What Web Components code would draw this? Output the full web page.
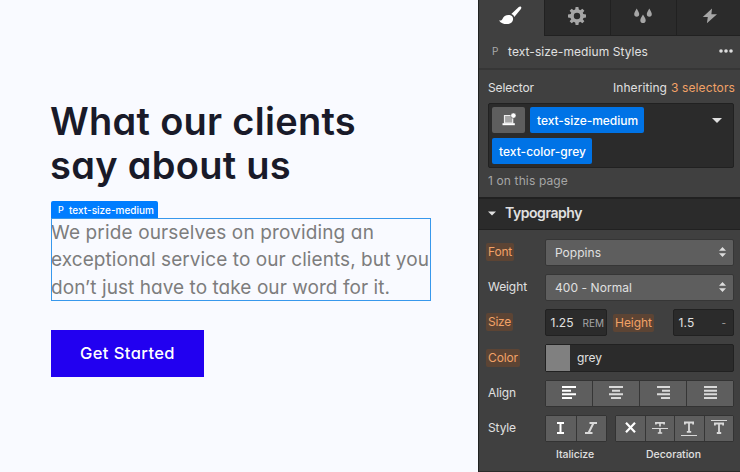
<!DOCTYPE html>
<html lang="en">
<head>
<meta charset="utf-8">
<title>Designer</title>
<style>
  body{
    margin: 0;
    width: 740px;
    height: 472px;
    overflow: hidden;
    font-family: Inter, sans-serif;
    font-size: 12px;
  }
</style>
</head>
<body>
<designer-app>
  <page-canvas slot="canvas"></page-canvas>
  <style-panel slot="panel"></style-panel>
</designer-app>

<script>
const icons = {
  brush: `<svg width="24" height="20" viewBox="0 0 24 20"><path fill="#fff" d="M22.9.8c.7.6.5 1.400 0 2.100l-6.600 8.100c-.5-1.400-1.600-2.400-3-2.900L20.800 1c.6-.5 1.500-.7 2.100-.2zM11.600 9.100c2.200.3 3.500 1.900 3.500 3.900-.1 3.400-3 5.100-6.600 5.100-3 0-5.600-.9-7.500-3.600 1.500.3 3-.1 3.600-1.800.8-2.500 3.700-4 7-3.600z"/></svg>`,
  gear: `<svg width="20" height="20" viewBox="-10 -10 20 20" fill="#a6a6a6"><path fill-rule="evenodd" d="M0-6.700A6.700 6.700 0 1 1 0 6.700 6.700 6.700 0 1 1 0-6.700zM0-3.200A3.200 3.200 0 1 0 0 3.200 3.200 3.200 0 1 0 0-3.200z"/><path d="M-1.900-6-1.400-9h2.800l.5 3zM-1.900 6-1.400 9h2.800l.5-3zM-6-1.900-9-1.400v2.800l3 .5zM6-1.900 9-1.400v2.800l-3 .5z"/><path transform="rotate(45)" d="M-1.900-6-1.400-9h2.800l.5 3zM-1.900 6-1.400 9h2.800l.5-3zM-6-1.900-9-1.400v2.800l3 .5zM6-1.900 9-1.400v2.800l-3 .5z"/></svg>`,
  drops: `<svg width="20" height="16" viewBox="0 0 20 16" fill="#a6a6a6"><path d="M3.700.5c1.400 2.500 2.500 4 2.500 5.600a2.500 2.600 0 0 1-5 0C1.200 4.500 2.300 3 3.700.5zM16.300.5c1.400 2.500 2.500 4 2.500 5.600a2.500 2.600 0 0 1-5 0c0-1.600 1.100-3.100 2.500-5.600zM10 6.500c1.500 2.600 2.700 4.100 2.700 5.800a2.700 2.800 0 0 1-5.400 0c0-1.700 1.200-3.200 2.700-5.800z"/></svg>`,
  bolt: `<svg width="16" height="16" viewBox="0 0 16 16"><path fill="#a6a6a6" d="M10 .5.8 9.100h5L4.900 15.300 15 6.300H9.400z"/></svg>`,
  dots: `<svg width="14" height="4" viewBox="0 0 14 4" fill="#ddd"><circle cx="2" cy="2" r="1.800"/><circle cx="7" cy="2" r="1.800"/><circle cx="12" cy="2" r="1.800"/></svg>`,
  state: `<svg width="14" height="14" viewBox="0 0 14 14"><path d="M2.500 10V2.500h8.200V10z" fill="#a5a5a5" stroke="#eee" stroke-width="1.200"/><path d="M.5 10.200h12.300v2H.5z" fill="#fff"/><circle cx="11.400" cy="2.600" r="2.700" fill="#fff" stroke="#5e5e5e" stroke-width=".7"/></svg>`,
  caret: `<svg width="10" height="5" viewBox="0 0 10 5"><path fill="#e0e0e0" d="M0 0h10L5 5z"/></svg>`,
  sort: `<svg width="7" height="10" viewBox="0 0 7 10"><path fill="#ddd" d="M3.500 0 7 3.800H0zM3.500 10 7 6.200H0z"/></svg>`,
  left: `<svg width="14" height="13" viewBox="0 0 14 13"><path stroke="#fff" stroke-width="2" d="M0 1h14M0 4.700h9M0 8.300h14M0 12h10"/></svg>`,
  center: `<svg width="14" height="13" viewBox="0 0 14 13"><path stroke="#d9d9d9" stroke-width="2" d="M0 1h14M3 4.700h8M0 8.300h14M2 12h10"/></svg>`,
  right: `<svg width="14" height="13" viewBox="0 0 14 13"><path stroke="#d9d9d9" stroke-width="2" d="M1 1h13M6 4.700h8M1 8.300h13M5 12h9"/></svg>`,
  justify: `<svg width="14" height="13" viewBox="0 0 14 13"><path stroke="#d9d9d9" stroke-width="2" d="M1 1h13M1 4.700h13M1 8.300h13M1 12h13"/></svg>`,
  roman: `<svg width="9" height="12" viewBox="0 0 9 12"><path fill="none" stroke="#fff" stroke-width="2" d="M1 1h7M1 11h7M4.500 1v10"/></svg>`,
  italic: `<svg width="12" height="12" viewBox="0 0 12 12"><path fill="none" stroke="#d9d9d9" stroke-width="2" d="M4.500 1H12M0 11h7.500M8.500 1l-5 10"/></svg>`,
  none: `<svg width="11" height="11" viewBox="0 0 11 11"><path stroke="#fff" stroke-width="2.200" d="M1 .8l9 9.400M10 .8l-9 9.400"/></svg>`,
  strike: `<svg width="16" height="16" viewBox="0 0 16 16"><path fill="none" stroke="#d9d9d9" stroke-width="1.700" d="M3.900 4.500V2.800h8.200v1.700M8 2.800v3.700M8 8.500v4.500M5.800 13h4.400"/><path stroke="#d9d9d9" d="M0 8.500h16"/></svg>`,
  under: `<svg width="16" height="16" viewBox="0 0 16 16"><path fill="none" stroke="#d9d9d9" stroke-width="1.800" d="M3.900 4.500v-2h8.200v2M8 2.500v9M5.800 11.800h4.400"/><path stroke="#d9d9d9" d="M0 15.500h16"/></svg>`,
  over: `<svg width="16" height="16" viewBox="0 0 16 16"><path fill="none" stroke="#d9d9d9" stroke-width="1.800" d="M3.900 5.500v-2h8.200v2M8 3.500v9M5.800 13h4.400"/><path stroke="#d9d9d9" d="M0 .5h16"/></svg>`
};

class BaseElement extends HTMLElement{
  constructor(){
    super();
    this.attachShadow({mode:'open'});
    this.shadowRoot.innerHTML = this.render();
  }
}

class DesignerApp extends BaseElement{
  render(){
    return `
      <style>
        :host{ display: grid; grid-template-columns: 478px 262px; height: 472px; }
      </style>
      <slot name="canvas"></slot>
      <slot name="panel"></slot>
    `;
  }
}

class PageCanvas extends BaseElement{
  render(){
    return `
      <style>
        :host{ display: block; box-sizing: border-box; padding: 99px 47px 0 50px; background: #f9faff; }
        h2{ margin: 0; font-size: 38px; line-height: 44px; font-weight: 600; color: #191a29; }
        h2, p, button{ font-feature-settings: "cv11"; }
        .tag{
          display: flex; align-items: center; box-sizing: border-box;
          width: 107px; height: 17px; margin: 14px 0 0 1px; padding-left: 7px; gap: 6px;
          background: #007dff; color: #fff; font-size: 10px; font-weight: 500;
          border-radius: 2px 2px 0 0;
        }
        .tag span{ font-size: 9px; width: 5px; }
        p{
          box-sizing: border-box; margin: 0 0 0 1px; height: 83px; padding-top: .5px;
          font-size: 19px; line-height: 27.5px; color: #7d7d7d;
          outline: 1px solid #3898ec; outline-offset: -1px;
        }
        button{
          display: block; width: 153px; height: 47px; margin: 29px 0 0 1px; padding: 0 0 2px 29px;
          border: 0; background: #2200f0; color: #fff; text-align: left;
          font-family: inherit; font-size: 16.5px; font-weight: 500;
        }
      </style>
      <h2><fit-text width="306">What our clients</fit-text><fit-text width="241">say about us</fit-text></h2>
      <div class="tag"><span>P</span><fit-text width="85">text-size-medium</fit-text></div>
      <p>
        <fit-text width="323">We pride ourselves on providing an</fit-text>
        <fit-text width="378">exceptional service to our clients, but you</fit-text>
        <fit-text width="339">don’t just have to take our word for it.</fit-text>
      </p>
      <button><fit-text width="95">Get Started</fit-text></button>
    `;
  }
}

class StylePanel extends BaseElement{
  render(){
    return `
      <style>
        :host{
          display: flex; flex-direction: column; box-sizing: border-box;
          border-left: 1px solid #212121; background: #404040; color: #e0e0e0;
        }
        nav{ display: grid; grid-template-columns: 65px 66px 66px 64px; height: 36px; flex: none; }
        header{
          display: flex; align-items: center; flex: none; box-sizing: border-box;
          height: 34px; padding: 0 7px 2px 13px; border-bottom: 2px solid #363636;
        }
        header span{ width: 16px; font-size: 10px; color: #aaa; }
        header svg{ margin-left: auto; display: block; }
        .selector{ flex: none; box-sizing: border-box; height: 127px; padding: 8px 5px 0 9px; }
        .top{ display: flex; height: 20px; line-height: 20px; margin-bottom: 5px; }
        .top fit-text:nth-child(2){ margin-left: auto; margin-right: 4px; }
        .orange{ color: #f2a267; }
        .box{
          position: relative; display: flex; flex-wrap: wrap; align-content: flex-start;
          gap: 5px; box-sizing: border-box; height: 65px; padding: 3px; margin-right: 1px;
          border: 1px solid #212121; border-radius: 2px; background: #2b2b2b;
        }
        .chip{
          display: flex; align-items: center; box-sizing: border-box; height: 26px; padding: 0 6px 0 7px;
          border-radius: 2px; background: #0073e6; color: #fff; font-weight: 500;
        }
        .chip.state{ width: 33px; padding: 0 0 1px; justify-content: center; background: #5e5e5e; }
        .caret{ position: absolute; right: 11px; top: 14px; display: flex; }
        .count{ margin-top: 5px; line-height: 15px; color: #a6a6a6; }
        h3{
          display: flex; align-items: center; gap: 9px; flex: none; box-sizing: border-box;
          height: 33px; margin: 0; padding: 0 0 3px 9px; font-size: 14px; font-weight: 600;
          background: #2b2b2b; border-top: 2px solid #212121; border-bottom: 1px solid #212121;
        }
        h3 svg{ width: 8px; margin-top: 2px; }
        .rows{ display: grid; gap: 8px; padding: 9px 5px 0 7px; grid-template-rows: 27px 27px 27px 28px 27px 27px; }
        .foot{ display: grid; grid-template-columns: 132px 1fr; padding: 6px 0 0 77px; font-size: 10.500px; font-weight: 500; }
        .foot fit-text:last-child{ margin-left: -42px; }
        .end{ margin-top: auto; height: 1px; background: #2b2b2b; }
      </style>
      <nav>
        <panel-tab icon="brush" active></panel-tab>
        <panel-tab icon="gear"></panel-tab>
        <panel-tab icon="drops"></panel-tab>
        <panel-tab icon="bolt"></panel-tab>
      </nav>
      <header><span>P</span><fit-text width="140">text-size-medium Styles</fit-text>${icons.dots}</header>
      <section class="selector">
        <div class="top">
          <fit-text width="46">Selector</fit-text>
          <fit-text width="54">Inheriting</fit-text>
          <fit-text class="orange" width="64">3 selectors</fit-text>
        </div>
        <div class="box">
          <div class="chip state">${icons.state}</div>
          <div class="chip"><fit-text width="101">text-size-medium</fit-text></div>
          <div class="chip"><fit-text width="87">text-color-grey</fit-text></div>
          <div class="caret">${icons.caret}</div>
        </div>
        <div class="count"><fit-text width="80">1 on this page</fit-text></div>
      </section>
      <h3>${icons.caret}<fit-text width="77">Typography</fit-text></h3>
      <div class="rows">
        <style-row>
          <style-label slot="label" set><fit-text width="24">Font</fit-text></style-label>
          <select-box><fit-text width="46">Poppins</fit-text></select-box>
        </style-row>
        <style-row>
          <style-label slot="label"><fit-text width="39">Weight</fit-text></style-label>
          <select-box><fit-text width="77">400 - Normal</fit-text></select-box>
        </style-row>
        <style-row>
          <style-label slot="label" set><fit-text width="23">Size</fit-text></style-label>
          <unit-input unit="REM" style="width:62px"><fit-text width="23">1.25</fit-text></unit-input>
          <style-label set style="margin-left:6px"><fit-text width="37">Height</fit-text></style-label>
          <unit-input unit="-" style="width:61px;margin-left:auto"><fit-text width="16">1.5</fit-text></unit-input>
        </style-row>
        <style-row>
          <style-label slot="label" set><fit-text width="30">Color</fit-text></style-label>
          <color-input color="#808080"><fit-text width="25">grey</fit-text></color-input>
        </style-row>
        <style-row>
          <style-label slot="label"><fit-text width="28">Align</fit-text></style-label>
          <button-group icons="left center right justify" style="width:189px"></button-group>
        </style-row>
        <style-row>
          <style-label slot="label"><fit-text width="28">Style</fit-text></style-label>
          <button-group icons="roman italic" style="width:62px"></button-group>
          <button-group icons="none strike under over" style="width:119px;margin-left:auto"></button-group>
        </style-row>
      </div>
      <div class="foot"><fit-text width="38">Italicize</fit-text><fit-text width="55">Decoration</fit-text></div>
      <div class="end"></div>
    `;
  }
}

class PanelTab extends BaseElement{
  render(){
    return `
      <style>
        :host{
          display: flex; align-items: center; justify-content: center; box-sizing: border-box;
          padding: 0 2px 3px 0; background: #2b2b2b;
          border-left: 1px solid #212121; border-bottom: 1px solid #212121;
        }
        :host([active]){ background: #404040; border-color: #404040; padding: 0 5px 4px 0; }
        :host([icon="bolt"]){ padding: 0 0 3px 2px; }
        svg{ display: block; }
      </style>
      ${icons[this.getAttribute('icon')]}
    `;
  }
}

class StyleRow extends BaseElement{
  render(){
    return `
      <style>
        :host{ display: grid; grid-template-columns: 59px 189px; align-items: stretch; }
        .label, .field{ display: flex; align-items: center; }
        .field{ align-items: stretch; }
        .label{ padding-bottom: 1px; }
      </style>
      <div class="label"><slot name="label"></slot></div>
      <div class="field"><slot></slot></div>
    `;
  }
}

class StyleLabel extends BaseElement{
  render(){
    return `
      <style>
        :host{
          display: flex; align-items: center; align-self: center; box-sizing: border-box;
          height: 18px; padding: 0 2px 1px; border-radius: 2px;
        }
        :host([set]){ background: #5c4434; color: #f2a267; }
      </style>
      <slot></slot>
    `;
  }
}

class SelectBox extends BaseElement{
  render(){
    return `
      <style>
        :host{
          display: flex; align-items: center; justify-content: space-between; flex: 1;
          box-sizing: border-box; padding: 0 7px 0 9px;
          border: 1px solid #363636; border-radius: 2px; background: #5e5e5e;
        }
        svg{ display: block; margin-bottom: 1px; }
      </style>
      <slot></slot>${icons.sort}
    `;
  }
}

class UnitInput extends BaseElement{
  render(){
    return `
      <style>
        :host{
          display: flex; align-items: center; justify-content: space-between;
          box-sizing: border-box; padding: 0 2px 0 4.500px;
          border: 1px solid #212121; border-radius: 2px; background: #2b2b2b;
        }
        span{ font-size: 10px; color: #a6a6a6; }
        :host([unit="-"]) span{ padding-right: 5px; }
      </style>
      <slot></slot><span>${this.getAttribute('unit')}</span>
    `;
  }
}

class ColorInput extends BaseElement{
  render(){
    return `
      <style>
        :host{
          display: flex; align-items: center; flex: 1; box-sizing: border-box;
          border: 1px solid #212121; border-radius: 2px; background: #2b2b2b;
        }
        i{ width: 24px; height: 100%; margin-right: 7px; background: ${this.getAttribute('color')}; }
        ::slotted(*){ padding-bottom: 1px; }
      </style>
      <i></i><slot></slot>
    `;
  }
}

class ButtonGroup extends BaseElement{
  render(){
    const buttons = this.getAttribute('icons').split(' ').map(name => `<div>${icons[name]}</div>`);
    return `
      <style>
        :host{
          display: grid; grid-auto-flow: column; grid-auto-columns: 1fr; gap: 1px;
          box-sizing: border-box; border: 1px solid #333; border-radius: 2px; background: #363636;
        }
        div{ display: flex; align-items: center; justify-content: center; padding-bottom: 2px; background: #5e5e5e; }
        div:first-child{ background: #2b2b2b; }
        svg{ display: block; }
      </style>
      ${buttons.join('')}
    `;
  }
}

// tracks its text out (or in) to the given width
class FitText extends BaseElement{
  render(){
    return `
      <style>
        :host{ display: block; white-space: nowrap; }
        span{ display: inline-block; }
      </style>
      <span><slot></slot></span>
    `;
  }

  connectedCallback(){
    const span = this.shadowRoot.querySelector('span');
    const target = Number(this.getAttribute('width'));
    const natural = span.getBoundingClientRect().width;
    const count = this.textContent.length;
    span.style.letterSpacing = (target - natural) / count + 'px';
  }
}

window.customElements.define('designer-app', DesignerApp);
window.customElements.define('page-canvas', PageCanvas);
window.customElements.define('style-panel', StylePanel);
window.customElements.define('panel-tab', PanelTab);
window.customElements.define('style-row', StyleRow);
window.customElements.define('style-label', StyleLabel);
window.customElements.define('select-box', SelectBox);
window.customElements.define('unit-input', UnitInput);
window.customElements.define('color-input', ColorInput);
window.customElements.define('button-group', ButtonGroup);
// last, so everything around it is laid out when it measures
window.customElements.define('fit-text', FitText);
</script>
</body>
</html>
